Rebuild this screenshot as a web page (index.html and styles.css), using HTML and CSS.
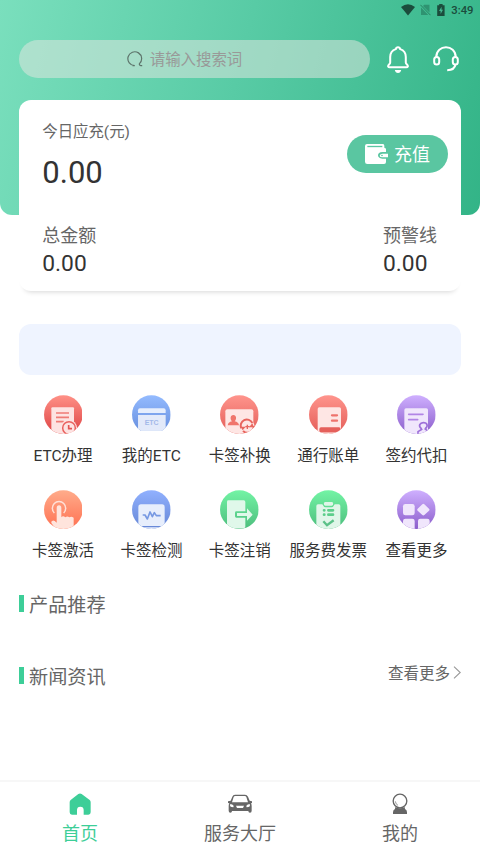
FILE: index.html
```html
<!DOCTYPE html>
<html lang="zh-CN">
<head>
<meta charset="utf-8">
<title>ETC</title>
<link rel="stylesheet" href="styles.css">
</head>
<body>
<div class="app">
  <header class="hero">
    <div class="status">
      <svg class="wifi" width="14" height="12" viewBox="0 0 14 12"><path d="M0 3Q7-2.4 14 3L7 11.6Z"/></svg>
      <svg class="sim" width="11" height="12" viewBox="0 0 11 12"><path d="M4.200 .7H9.500V8.400L3 1.900ZM1 3.600L8.300 11.100H1Z" fill="#2f9371"/><path d="M.4 .8L10.500 11.200" stroke="#27805f" fill="none"/></svg>
      <svg class="battery" width="8" height="12" viewBox="0 0 8 12"><path d="M2.200 0H5.600V1.200H7.600V12H.2V1.200H2.200Z"/><path d="M4.600 2.700L2 6.900H3.600V10L6 5.800H4.500Z" fill="#45b892"/></svg>
      <span class="clock">3:49</span>
    </div>
    <div class="topbar">
      <div class="search">
        <svg width="16" height="16" viewBox="0 0 16 16"><path d="M5.500 14.600H7.800A6.900 6.900 0 1 1 12.300 12.900Q12.300 14.700 15.200 14.700" /></svg>
        <span>请输入搜索词</span>
      </div>
      <svg class="bell" width="22" height="28" viewBox="0 0 22 28"><path class="line" d="M11 1.200C9.500 1.200 9 2.100 8.800 3.100C5.200 4.200 3.200 7 3.200 11V16.600C3.200 17.800 2.500 18 1.700 18.900C.6 20.300 1.200 21.300 2.600 21.300H19.400C20.800 21.300 21.400 20.300 20.300 18.900C19.500 18 18.800 17.800 18.800 16.600V11C18.800 7 16.800 4.200 13.200 3.100C13 2.100 12.500 1.200 11 1.200Z"/><path d="M7.800 24H14.200Q13.600 27 11 27Q8.400 27 7.800 24Z" fill="#fff"/></svg>
      <svg class="headset" width="26" height="26" viewBox="0 0 26 26"><path class="line" d="M3.300 11C3.300-2 22.700-2 22.700 11M22.600 18C22 22 18.500 24.200 14.200 24.200"/><rect class="line" x="1.200" y="11" width="5" height="7.600" rx="2.500"/><rect class="line" x="19.800" y="11" width="5" height="7.600" rx="2.500"/></svg>
    </div>
  </header>

  <section class="card">
    <div class="due">
      <div>
        <div class="due-label">今日应充(元)</div>
        <div class="due-value">0.00</div>
      </div>
      <div class="recharge">
        <svg width="23" height="20" viewBox="0 0 69 60"><path d="M6 0H54Q58 0 58 5V11Q63 11 63 16V24H52Q39 25 39 34Q39 43 52 44H63V54Q63 60 57 60H7Q0 60 0 53V6Q0 0 6 0Z" fill="#fff"/><path d="M7 7.500H52" stroke="#5ac6a1" stroke-width="4"/><path d="M69 29H52Q44 30 44 35Q44 40 52 40H69Z" fill="#fff"/><circle cx="51" cy="34.500" r="2.500" fill="#5ac6a1"/></svg>
        <span>充值</span>
      </div>
    </div>
    <div class="totals">
      <div><div class="total-label">总金额</div><div class="total-value">0.00</div></div>
      <div><div class="total-label">预警线</div><div class="total-value">0.00</div></div>
    </div>
  </section>

  <div class="banner"></div>

  <svg class="defs" width="0" height="0">
    <defs>
      <clipPath id="disc"><circle cx="58" cy="59" r="58"/></clipPath>
      <linearGradient id="red" x2="0" y2="1"><stop stop-color="#ff9187"/><stop offset="1" stop-color="#dd4243"/></linearGradient>
      <linearGradient id="coral" x2="0" y2="1"><stop stop-color="#ff958d"/><stop offset="1" stop-color="#e35c57"/></linearGradient>
      <linearGradient id="blue" x2="0" y2="1"><stop stop-color="#94bbff"/><stop offset="1" stop-color="#6890df"/></linearGradient>
      <linearGradient id="indigo" x2="0" y2="1"><stop stop-color="#91b1ff"/><stop offset="1" stop-color="#6586d5"/></linearGradient>
      <linearGradient id="purple" x2="0" y2="1"><stop stop-color="#cfb0ff"/><stop offset="1" stop-color="#8b5dcb"/></linearGradient>
      <linearGradient id="orange" x2="0" y2="1"><stop stop-color="#ffac8b"/><stop offset="1" stop-color="#ff7051"/></linearGradient>
      <linearGradient id="green" x2="0" y2="1"><stop stop-color="#73f4a5"/><stop offset="1" stop-color="#4dbd7d"/></linearGradient>
    </defs>
  </svg>

  <nav class="grid">
    <div class="item">
      <svg viewBox="0 0 116 118"><g clip-path="url(#disc)"><rect width="116" height="118" fill="url(#red)"/><rect x="22" y="37" width="68" height="90" rx="3" fill="#fde3e2"/><path d="M36 54H75M36 67H75M36 80H59" stroke="#ef7b76" stroke-width="5"/><circle cx="75" cy="99" r="24" fill="#fde3e2"/><circle cx="75" cy="99" r="19" fill="none" stroke="#e9625f" stroke-width="4.500"/><path d="M74 90V101H84" stroke="#e25553" stroke-width="5" fill="none"/></g></svg>
      <span>ETC办理</span>
    </div>
    <div class="item">
      <svg viewBox="0 0 116 118"><g clip-path="url(#disc)"><rect width="116" height="108" fill="url(#blue)"/><path d="M18 54V46Q18 40 24 40H95Q101 40 101 46V54Z" fill="#e6eefd"/><rect x="18" y="60" width="83" height="48" fill="#e3eafa"/><text class="etc" x="38" y="90">ETC</text></g></svg>
      <span>我的ETC</span>
    </div>
    <div class="item">
      <svg viewBox="0 0 116 118"><g clip-path="url(#disc)"><rect width="116" height="118" fill="url(#coral)"/><rect x="16" y="43" width="84" height="80" rx="6" fill="#fee6e4"/><path d="M40 60C30 60 30 73 36 79Q24 82 23 91H57Q56 82 44 79C50 73 50 60 40 60Z" fill="#f0756c"/><circle cx="82" cy="96" r="22" fill="#fee6e4"/><path d="M64 100A18 18 0 0 1 97 84M101 93A19 19 0 0 1 69 108" fill="none" stroke="#e8655e" stroke-width="6"/><path d="M62 95H77L68 106ZM102 97H87L97 85Z" fill="#e8655e"/><path d="M76 95H89M82 89V102" stroke="#e8655e" stroke-width="4"/></g></svg>
      <span>卡签补换</span>
    </div>
    <div class="item">
      <svg viewBox="0 0 116 118"><g clip-path="url(#disc)"><rect width="116" height="118" fill="url(#coral)"/><rect x="26" y="37" width="70" height="76" rx="5" fill="#fee6e4"/><path d="M69 61H84M69 77H84" stroke="#ee736c" stroke-width="7" stroke-linecap="round"/><rect x="31" y="97" width="64" height="15" rx="5" fill="#e5605b"/><path d="M30 114H98V118H30Z" fill="#fee6e4"/></g></svg>
      <span>通行账单</span>
    </div>
    <div class="item">
      <svg viewBox="0 0 116 118"><g clip-path="url(#disc)"><rect width="116" height="118" fill="url(#purple)"/><rect x="22" y="40" width="71" height="84" rx="5" fill="#f0e6fc"/><path d="M35 58H78M35 74H62" stroke="#b184e5" stroke-width="5" stroke-linecap="round"/><path d="M74 102C62 93 69 83 79 83C91 83 95 93 84 102" fill="#f0e6fc" stroke="#9e70d9" stroke-width="5"/><path d="M76 102L63 110V118M83 101L95 110" fill="none" stroke="#9e70d9" stroke-width="5"/></g></svg>
      <span>签约代扣</span>
    </div>
    <div class="item">
      <svg viewBox="0 0 116 118"><g clip-path="url(#disc)"><rect width="116" height="118" fill="url(#orange)"/><path d="M31 69A20 20 0 1 1 59 69" fill="none" stroke="#ffe0d7" stroke-width="4.500"/><path d="M38 54Q38 46 45 46Q52 46 52 54V82Q57 76 64 82Q70 77 76 82Q82 78 89 83V118H36L22 99Q21 93 26 92Q31 91 38 98Z" fill="#ffe4dc"/></g></svg>
      <span>卡签激活</span>
    </div>
    <div class="item">
      <svg viewBox="0 0 116 118"><g clip-path="url(#disc)"><rect width="116" height="118" fill="url(#indigo)"/><rect x="19" y="43" width="79" height="65" rx="8" fill="#e7eefc"/><path d="M32 75H39L46 87L54 66L61 80L67 68L73 77H86" fill="none" stroke="#7799e2" stroke-width="5" stroke-linejoin="round"/><path d="M20 112H96V118H20Z" fill="#e7eefc"/></g></svg>
      <span>卡签检测</span>
    </div>
    <div class="item">
      <svg viewBox="0 0 116 118"><g clip-path="url(#disc)"><rect width="116" height="118" fill="url(#green)"/><path d="M25 31H71Q76 31 76 36V64H49Q45 64 45 68V79Q45 83 49 83H76V110Q76 114 71 114H21V35Q21 31 25 31Z" fill="#e0f8ea"/><path d="M51 69H81V55L98 74L81 92V78H51Z" fill="#e0f8ea"/><path d="M21 117H76" stroke="#e0f8ea" stroke-width="3"/></g></svg>
      <span>卡签注销</span>
    </div>
    <div class="item">
      <svg viewBox="0 0 116 118"><g clip-path="url(#disc)"><rect width="116" height="118" fill="url(#green)"/><path d="M27 43H40Q44 52 50 52H67Q73 52 77 43H89Q94 43 94 48V118H22V48Q22 43 27 43Z" fill="#e0f6e9"/><rect x="45" y="36" width="27" height="11" rx="4" fill="#e0f6e9"/><path d="M45 61H46M58 61H72M45 74H46M58 74H72" stroke="#5cce8b" stroke-width="8" stroke-linecap="round"/><path d="M43 94L54 106L74 91" fill="none" stroke="#5bc188" stroke-width="7"/></g></svg>
      <span>服务费发票</span>
    </div>
    <div class="item">
      <svg viewBox="0 0 116 118"><g clip-path="url(#disc)"><rect width="116" height="118" fill="url(#purple)"/><g fill="#f0e6fc"><rect x="18" y="42" width="35" height="34" rx="7"/><path d="M76 43Q79 40 82 43L96 56Q99 59 96 62L82 75Q79 78 76 75L62 62Q59 59 62 56Z"/><rect x="18" y="86" width="35" height="40" rx="7"/><rect x="63" y="86" width="35" height="40" rx="7"/></g></g></svg>
      <span>查看更多</span>
    </div>
  </nav>

  <section class="section">
    <h2><span>产品推荐</span></h2>
  </section>
  <section class="section">
    <h2><span>新闻资讯</span></h2>
    <div class="more"><span>查看更多</span><svg width="8" height="13" viewBox="0 0 8 13"><path d="M1 .6L7.200 6.500L1 12.400"/></svg></div>
  </section>

  <footer class="tabs">
    <div class="tab active">
      <svg width="22" height="22" viewBox="0 0 66 66"><path d="M28 3Q33 0 38 3L62 21Q65 23 65 28V58Q65 65 58 65H44V51Q44 41 34 41Q24 41 24 51V65H9Q2 65 2 58V28Q2 23 5 21Z"/></svg>
      <span>首页</span>
    </div>
    <div class="tab">
      <svg width="24" height="22" viewBox="0 0 72 66"><path fill-rule="evenodd" d="M21 5H51Q57 5 60 11L65 23L72 25V30L69 31Q71 34 71 39V53Q71 59 66 59Q61 59 61 54H12Q12 59 7 59Q2 59 2 53V39Q2 34 4 31L0 30V25L8 23L13 11Q15 5 21 5ZM22 9Q18 9 17 12L12 28H60L55 12Q54 9 50 9ZM7 33Q3 43 16 43Q20 36 7 33ZM65 33Q52 36 56 43Q69 43 65 33ZM24 38L27 45H45L48 38Z"/></svg>
      <span>服务大厅</span>
    </div>
    <div class="tab">
      <svg width="16" height="22" viewBox="0 0 48 66"><circle cx="24" cy="24" r="20.500" fill="none" stroke="#666" stroke-width="4"/><path d="M10 25Q11 34 18 37" fill="none" stroke="#666" stroke-width="2"/><path d="M10 42Q24 50 38 42L39 48Q45 51 45 58V63H3V58Q3 51 9 48Z"/></svg>
      <span>我的</span>
    </div>
  </footer>
</div>
</body>
</html>
```
FILE: styles.css
```css
* { box-sizing: border-box; }
body {
  margin: 0;
  background: #fff;
  color: #333;
  font-family: Roboto, "Noto Sans CJK SC", sans-serif;
}
.app {
  width: 480px;
  height: 853px;
  display: flex;
  flex-direction: column;
  overflow: hidden;
}
.hero {
  flex: none;
  height: 215px;
  border-radius: 0 0 12px 12px;
  background: linear-gradient(104deg, #7adfbd 0%, #58cba5 48%, #33b487 100%);
}
.status {
  height: 20px;
  padding: 0 6.500px 0 0;
  display: flex;
  justify-content: flex-end;
  align-items: center;
  fill: #1b4c3c;
}
.wifi { margin: -1px 5px 0 0; }
.sim { margin: -1px 6px 0 0; }
.battery { margin: -1px 6px 0 0; }
.clock {
  margin-top: 1px;
  font-size: 11.3px;
  font-weight: 500;
  line-height: 20px;
  color: #1b4c3c;
}
.topbar {
  margin-top: 20px;
  padding-left: 19px;
  display: flex;
  align-items: flex-start;
}
.search {
  width: 351px;
  height: 38px;
  padding: 0 20px 0 0;
  border-radius: 19px;
  background: rgba(221, 230, 222, .55);
  display: flex;
  align-items: center;
  justify-content: center;
  gap: 7px;
  font-size: 15.4px;
  line-height: 24px;
  color: #999998;
}
.search span { margin-top: 1px; }
.search svg { fill: none; stroke: #5d736a; stroke-width: 1.2; }
.line { fill: none; stroke: #fff; stroke-width: 2; }
.bell { margin: 6px 0 0 17px; }
.headset { margin: 6px 0 0 24px; }
.card {
  flex: none;
  height: 191px;
  margin: -115px 19px 0;
  padding: 20px 24px 0 23.300px;
  border-radius: 12px;
  background: #fff;
  box-shadow: 0 6px 5px -5px rgba(0, 0, 0, .16);
}
.due { display: flex; justify-content: space-between; }
.due-label { font-size: 15.4px; line-height: 24px; color: #666; }
.due-value { margin-top: 10px; font-size: 31px; line-height: 38px; }
.recharge {
  width: 101px;
  height: 38px;
  margin: 15px -11px 0 0;
  padding-left: 18px;
  border-radius: 19px;
  background: #5ac6a1;
  color: #fff;
  font-size: 18px;
  line-height: 26px;
  display: flex;
  align-items: center;
  gap: 6px;
}
.recharge span { margin-top: 2px; }
.totals { margin-top: 31px; display: flex; justify-content: space-between; }
.total-label { font-size: 18px; line-height: 26px; color: #666; }
.total-value { margin-top: 1px; font-size: 22.8px; line-height: 28px; }
.banner {
  flex: none;
  height: 51px;
  margin: 33px 19px 0;
  border-radius: 12px;
  background: #eff4ff;
}
.defs { flex: none; display: block; }
.grid {
  margin: 19.500px 19.200px 0 18.800px;
  display: grid;
  grid-template-columns: repeat(5, 1fr);
  grid-auto-rows: 95.500px;
}
.item {
  display: flex;
  flex-direction: column;
  align-items: center;
  font-size: 15.5px;
  line-height: 24px;
  white-space: nowrap;
}
.item svg { width: 38.700px; height: 39.300px; margin-bottom: 10px; }
.etc { font: bold 21px "Liberation Sans", sans-serif; fill: #a3b9e9; }
.section {
  height: 26px;
  margin: 5px 19px 0;
  display: flex;
  justify-content: space-between;
}
.section + .section { margin-top: 46px; }
h2 {
  margin: 0;
  display: flex;
  align-items: center;
  gap: 5px;
  font-size: 19.2px;
  font-weight: 400;
  line-height: 26px;
  color: #666;
}
h2 span { margin-top: 4px; }
h2::before { content: ""; width: 5px; height: 17px; background: #3dce98; }
.more {
  height: 20px;
  display: flex;
  align-items: center;
  gap: 3px;
  font-size: 15.5px;
  line-height: 20px;
  color: #666;
}
.more span { margin-top: 2px; }
.more svg { fill: none; stroke: #999; stroke-width: 1.1; }
.tabs {
  height: 73px;
  margin-top: auto;
  border-top: 2px solid #f7f7f7;
  display: grid;
  grid-template-columns: repeat(3, 1fr);
}
.tab {
  padding-top: 11px;
  display: flex;
  flex-direction: column;
  align-items: center;
  gap: 6px;
  font-size: 18px;
  line-height: 26px;
  color: #666;
  fill: #666;
}
.active { color: #3dce98; fill: #3dce98; }
```
